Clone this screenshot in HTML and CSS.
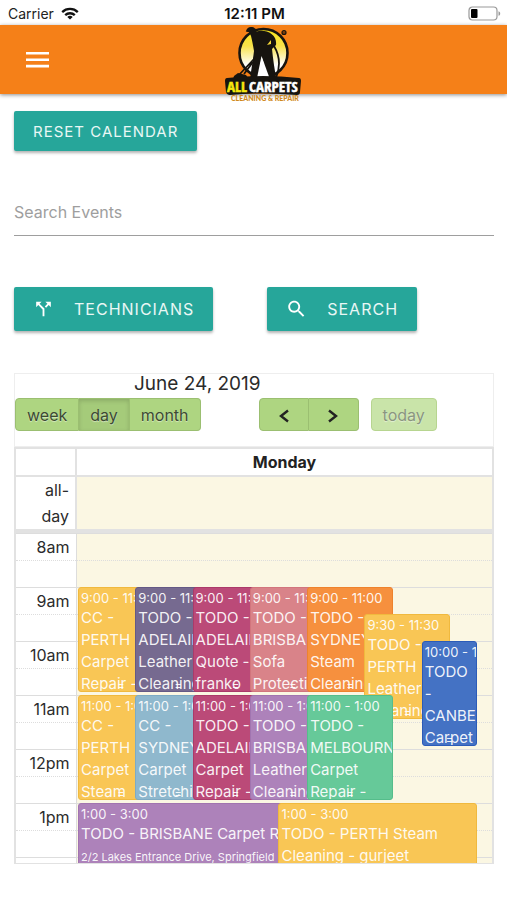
FILE: index.html
```html
<!DOCTYPE html>
<html lang="en">
<head>
    <meta charset="UTF-8">
    <meta name="viewport" content="width=device-width, initial-scale=1.0">
    <title>All Carpets Calendar</title>
    <link rel="stylesheet" href="styles.css">
</head>
<body>
    <div class="status-bar">
        <div class="carrier">
            <span>Carrier</span>
            <svg width="18" height="13" viewBox="0 0 18 13" fill="none" stroke="#111" stroke-width="2.3">
                <path d="M1.2 5.1a11.2 11.2 0 0 1 15.6 0"/>
                <path d="M4.2 8.2a6.9 6.9 0 0 1 9.6 0"/>
                <path d="M9 12.6L6.3 10a3.8 3.8 0 0 1 5.4 0z" fill="#111" stroke="none"/>
            </svg>
        </div>
        <span class="clock">12:11 PM</span>
        <svg class="battery" width="33" height="15" viewBox="0 0 33 15">
            <rect x="1" y="1" width="28" height="13" rx="3.5" fill="#fff" stroke="#999" stroke-width="1.2"/>
            <rect x="3" y="3" width="6.5" height="9" rx="1" fill="#000"/>
            <path d="M30.5 5.2v4.6c1.300-.4 1.700-1.300 1.700-2.300s-.4-1.900-1.700-2.300z" fill="#999"/>
        </svg>
    </div>

    <header class="navbar">
        <button class="menu-btn" aria-label="Menu">
            <svg width="23" height="16" viewBox="0 0 23 16" fill="#fff">
                <path d="M0 0h23v2.600H0zM0 6.400h23V9H0zM0 12.800h23v2.600H0z"/>
            </svg>
        </button>
        <a class="logo" href="#" aria-label="All Carpets">
            <svg width="78" height="78" viewBox="0 0 78 78">
                <defs>
                    <linearGradient id="sun" x1="0" y1="0" x2="0" y2="1">
                        <stop offset="0" stop-color="#f7e51b"/>
                        <stop offset=".35" stop-color="#f8e24a"/>
                        <stop offset=".75" stop-color="#fff"/>
                    </linearGradient>
                </defs>
                <circle cx="39.500" cy="27" r="24" fill="url(#sun)" stroke="#17140f" stroke-width="2.600"/>
                <path d="M22 5c1-3 3-4.500 6-4 3 .4 4.500 2.500 4.500 4.500 5-1.500 11-.5 15 2.500 4 3 5 7 4.500 11l-4 4c1 10 2.500 20 4.500 31H42c-.5-9-2-17-4-22-2 6-3 14-3 22h-9c1-10 3-20 4-29-1-6-2-11-3-15l-2-4c-2 0-4-.5-3-1z" fill="#17140f"/>
                <path d="M37.500 30l8 22H33z" fill="#fff"/>
                <path d="M47 14l-4 5 4-1z" fill="#f7d93a"/>
                <path d="M35 19L30 33 14 50M50 20c6 10 6 22 2 32M29 36l-9 12" fill="none" stroke="#17140f" stroke-width="1.800"/>
                <path d="M10 50l4-3 8 2 3 4H9z" fill="#17140f"/>
                <circle cx="60" cy="6.500" r="2" fill="#7d3c0a" stroke="#17140f" stroke-width="1.200"/>
                <path d="M3 52q36-4 72 0 2 0 2 3l-1 11q0 3-3 3-34-3-67 0-3 0-4-3L1 55q0-3 2-3z" fill="#17140f"/>
                <text x="3" y="66" class="logo-main"><tspan fill="#f6e70d" stroke="#f6e70d">ALL</tspan><tspan x="25" fill="#fff" stroke="#fff">CARPETS</tspan></text>
                <text x="7" y="75" class="logo-sub">CLEANING &amp; REPAIR</text>
            </svg>
        </a>
    </header>

    <main class="content">
        <button class="btn">RESET CALENDAR</button>

        <input class="search-input" type="search" placeholder="Search Events" aria-label="Search Events">

        <div class="actions">
            <button class="btn btn-icon">
                <svg width="24" height="24" viewBox="0 0 24 24" fill="#fff">
                    <path d="M14 4l2.290 2.290-2.880 2.880 1.420 1.420 2.880-2.880L20 10V4zM10 4H4v6l2.290-2.290 4.710 4.700V20h2v-8.410l-5.290-5.300z"/>
                </svg>
                TECHNICIANS
            </button>
            <button class="btn btn-icon">
                <svg width="24" height="24" viewBox="0 0 24 24" fill="#fff">
                    <path d="M15.500 14h-.79l-.28-.27C15.410 12.590 16 11.110 16 9.500 16 5.910 13.090 3 9.500 3S3 5.910 3 9.500 5.910 16 9.500 16c1.610 0 3.090-.59 4.230-1.570l.27.28v.79l5 4.990L20.490 19l-4.990-5zm-6 0C7.010 14 5 11.990 5 9.500S7.010 5 9.500 5 14 7.010 14 9.500 11.990 14 9.500 14z"/>
                </svg>
                SEARCH
            </button>
        </div>

        <section class="calendar">
            <div class="toolbar">
                <h2>June 24, 2019</h2>
                <div class="toolbar-row">
                    <div class="button-group views">
                        <button>week</button>
                        <button class="active">day</button>
                        <button>month</button>
                    </div>
                    <div class="button-group arrows">
                        <button aria-label="Previous">
                            <svg width="10" height="14" viewBox="0 0 10 14"><path d="M9 1.500L2 7l7 5.500"/></svg>
                        </button>
                        <button aria-label="Next">
                            <svg width="10" height="14" viewBox="0 0 10 14"><path d="M1 1.500L8 7l-7 5.500"/></svg>
                        </button>
                    </div>
                    <button class="today" disabled>today</button>
                </div>
            </div>

            <table class="day-head">
                <thead>
                    <tr><th class="axis"></th><th>Monday</th></tr>
                </thead>
                <tbody>
                    <tr class="all-day"><td class="axis">all-day</td><td class="today-cell"></td></tr>
                </tbody>
            </table>

            <div class="time-grid">
                <table class="slots">
                    <tbody>
                        <tr><td class="axis">8am</td><td></td></tr>
                        <tr class="minor"><td class="axis"></td><td></td></tr>
                        <tr><td class="axis">9am</td><td></td></tr>
                        <tr class="minor"><td class="axis"></td><td></td></tr>
                        <tr><td class="axis">10am</td><td></td></tr>
                        <tr class="minor"><td class="axis"></td><td></td></tr>
                        <tr><td class="axis">11am</td><td></td></tr>
                        <tr class="minor"><td class="axis"></td><td></td></tr>
                        <tr><td class="axis">12pm</td><td></td></tr>
                        <tr class="minor"><td class="axis"></td><td></td></tr>
                        <tr><td class="axis">1pm</td><td></td></tr>
                        <tr class="minor"><td class="axis"></td><td></td></tr>
                        <tr><td class="axis"></td><td></td></tr>
                    </tbody>
                </table>

                <!-- one grid row per half hour, 14 columns for the overlaps -->
                <div class="events">
                    <div class="event yellow at-9 col-1"><time>9:00 - 11:00</time><p>CC -<br>PERTH Carpet Repair -</p></div>
                    <div class="event slate at-9 col-3"><time>9:00 - 11:00</time><p>TODO - ADELAIDE Leather Cleaning</p></div>
                    <div class="event magenta at-9 col-5"><time>9:00 - 11:00</time><p>TODO - ADELAIDE Quote - franko</p></div>
                    <div class="event rose at-9 col-7"><time>9:00 - 11:00</time><p>TODO - BRISBANE Sofa Protection</p></div>
                    <div class="event orange at-9 col-9"><time>9:00 - 11:00</time><p>TODO - SYDNEY Steam Cleaning</p></div>
                    <div class="event yellow at-930 col-11"><time>9:30 - 11:30</time><p>TODO - PERTH Leather Cleaning</p></div>
                    <div class="event blue at-10 col-13"><time>10:00 - 12:00</time><p>TODO - CANBERRA Carpet</p></div>
                    <div class="event yellow at-11 col-1"><time>11:00 - 1:00</time><p>CC -<br>PERTH Carpet Steam</p></div>
                    <div class="event sky at-11 col-3"><time>11:00 - 1:00</time><p>CC -<br>SYDNEY Carpet Stretching</p></div>
                    <div class="event magenta at-11 col-5"><time>11:00 - 1:00</time><p>TODO - ADELAIDE Carpet Repair -</p></div>
                    <div class="event purple at-11 col-7"><time>11:00 - 1:00</time><p>TODO - BRISBANE Leather Cleaning</p></div>
                    <div class="event green at-11 col-9"><time>11:00 - 1:00</time><p>TODO - MELBOURNE Carpet Repair -</p></div>
                    <div class="event purple at-1 wide-left"><time>1:00 - 3:00</time><p>TODO - BRISBANE Carpet Repair</p><small>2/2 Lakes Entrance Drive, Springfield</small></div>
                    <div class="event yellow at-1 wide-right"><time>1:00 - 3:00</time><p>TODO - PERTH Steam Cleaning - gurjeet</p></div>
                </div>
            </div>
        </section>
    </main>
</body>
</html>
```
FILE: styles.css
```css
* {
    box-sizing: border-box;
}
body {
    font-family: Inter, 'Liberation Sans', sans-serif;
    font-size: 16px;
    margin: 0;
    background: #fff;
    color: #2b2b2b;
}
button {
    font-family: inherit;
    cursor: pointer;
}
.status-bar {
    display: grid;
    grid-template-columns: 1fr auto 1fr;
    align-items: center;
    height: 25px;
    padding: 2px 6px 0 8px;
    font-size: 14px;
    color: #222;
}
.carrier {
    display: flex;
    align-items: center;
    gap: 7px;
}
.clock {
    font-size: 15px;
    font-weight: 600;
    color: #111;
}
.battery {
    justify-self: end;
}
.navbar {
    position: relative;
    display: flex;
    align-items: center;
    height: 69px;
    padding: 0 26px;
    background: #f58018;
    box-shadow: 0 1px 4px rgba(0,0,0,0.45);
}
.menu-btn {
    padding: 0;
    border: none;
    background: none;
    line-height: 0;
}
/* logo hangs over the bottom edge of the bar */
.logo {
    position: absolute;
    top: 1px;
    left: 50%;
    margin-left: -30px;
    line-height: 0;
}
.logo-main {
    font-family: 'Liberation Sans Narrow', 'Open Sans Condensed', 'Liberation Sans', sans-serif;
    font-size: 15px;
    font-weight: 700;
    stroke-width: 0.5;
}
.logo-sub {
    font-family: Lato, sans-serif;
    font-size: 7px;
    font-weight: 900;
    fill: #d08a1c;
}
.content {
    padding: 17px 13px 36px 14px;
}
.btn {
    height: 40px;
    padding: 0 19px;
    border: none;
    border-radius: 2px;
    background: #26a69a;
    color: #e9f7f5;
    font-size: 15px;
    letter-spacing: 1px;
    box-shadow: 0 2px 3px rgba(0,0,0,0.3);
}
.search-input {
    display: block;
    width: 100%;
    height: 48px;
    margin: 37px 0 51px;
    padding: 0;
    border: none;
    border-bottom: 1px solid #9e9e9e;
    background: none;
    font-family: inherit;
    font-size: 16px;
    outline: none;
}
.search-input::placeholder {
    color: #9e9e9e;
}
.actions {
    display: flex;
    gap: 54px;
}
.btn-icon {
    display: flex;
    align-items: center;
    gap: 19px;
    height: 44px;
    padding: 0 19px 0 18px;
    font-size: 16px;
}
.btn-icon svg {
    width: 23px;
    height: 22px;
}
.calendar {
    margin-top: 42px;
}
.toolbar {
    height: 74px;
    border: 1px solid #eee;
}
.toolbar h2 {
    margin: 0 0 0 119px;
    font-size: 19px;
    font-weight: 400;
    line-height: 20px;
}
.toolbar-row {
    display: flex;
    margin-top: 4px;
}
.button-group {
    display: flex;
}
.toolbar button {
    height: 33px;
    padding: 0 11px;
    border: 1px solid #9bbf71;
    background: #aed581;
    color: #3c4a34;
    font-size: 16px;
    text-shadow: 0 1px 1px rgba(255,255,255,0.5);
}
.button-group button + button {
    border-left: none;
}
.button-group button:first-child {
    border-radius: 4px 0 0 4px;
}
.button-group button:last-child {
    border-radius: 0 4px 4px 0;
}
.toolbar .active {
    background: #a5cb7a;
    box-shadow: inset 0 2px 4px rgba(0,0,0,0.15);
}
.views {
    margin-right: 58px;
}
.arrows {
    margin-right: 12px;
}
.arrows button {
    width: 50px;
}
.arrows svg {
    display: block;
    margin: 2px auto 0;
    fill: none;
    stroke: #222;
    stroke-width: 2.4;
}
.toolbar .today {
    border-radius: 4px;
    border-color: #b7d590;
    background: #c9e4a9;
    color: #8a9680;
}
table {
    width: 100%;
    border-collapse: collapse;
    table-layout: fixed;
}
td,
th {
    padding: 0;
    border: 1px solid #ddd;
}
.axis {
    width: 61px;
    padding-right: 6px;
    background: #fff;
    text-align: right;
    font-weight: 400;
}
.day-head {
    border: 2px solid #e2e2e2;
}
.day-head th {
    height: 28px;
    border: 2px solid #e2e2e2;
    font-size: 16px;
    color: #222;
}
.all-day td {
    height: 54px;
    line-height: 26px;
    border: 2px solid #e2e2e2;
}
.all-day .axis {
    padding-left: 20px;
}
.today-cell {
    background: #fbf7e3;
}
.time-grid {
    position: relative;
    height: 333px;
    overflow: hidden;
    border: 2px solid #e2e2e2;
    border-width: 2px 2px 1px 2px;
}
.slots {
    background: #fbf7e3;
}
.slots tr {
    height: 27px;
}
.slots td {
    height: 27px;
    border-width: 1px 0 0 0;
    line-height: 26px;
}
.slots .axis {
    width: 60px;
    border-right: 1px solid #ddd;
}
.slots .minor td {
    border-top-style: dotted;
}
/* lies over the slot lines */
.events {
    position: absolute;
    top: 0;
    left: 62px;
    right: 13px;
    display: grid;
    grid-template-columns: repeat(14, 1fr);
    grid-template-rows: repeat(14, 27px);
}
.event {
    position: relative;
    min-width: 0;
    margin-bottom: 3px;
    padding: 1px 0 0 2px;
    overflow: hidden;
    border: 1px solid;
    border-radius: 3px;
    color: rgba(255,255,255,0.93);
}
.event time {
    display: block;
    height: 18px;
    font-size: 13px;
    line-height: 18px;
    white-space: nowrap;
}
.event p {
    margin: 0;
    font-size: 15px;
    line-height: 22px;
}
.event small {
    display: block;
    font-size: 11px;
    line-height: 24px;
    white-space: nowrap;
}
/* resize handle */
.event::after {
    content: '=';
    position: absolute;
    left: 0;
    right: 0;
    bottom: 0;
    font-size: 11px;
    line-height: 11px;
    text-align: center;
}
.at-9 { grid-row: 3 / span 4; }
.at-930 { grid-row: 4 / span 4; }
.at-10 { grid-row: 5 / span 4; }
.at-11 { grid-row: 7 / span 4; }
.at-1 { grid-row: 11 / span 4; }
.col-1 { grid-column: 1 / span 3; }
.col-3 { grid-column: 3 / span 3; }
.col-5 { grid-column: 5 / span 3; }
.col-7 { grid-column: 7 / span 3; }
.col-9 { grid-column: 9 / span 3; }
.col-11 { grid-column: 11 / span 3; }
.col-13 { grid-column: 13 / span 2; margin-right: 2px; }
.wide-left { grid-column: 1 / span 11; }
.wide-right { grid-column: 8 / span 7; margin-right: 2px; }
.yellow { background: #f9c655; border-color: #f0b93e; }
.slate { background: #766a90; border-color: #645985; }
.magenta { background: #bb4a78; border-color: #ab3a6a; }
.rose { background: #d98389; border-color: #d2757d; }
.orange { background: #f6903e; border-color: #ee832d; }
.blue { background: #4472c4; border-color: #2b5bb8; }
.sky { background: #8fb8cd; border-color: #7dabc4; }
.purple { background: #ad82ba; border-color: #a174b0; }
.green { background: #66c999; border-color: #55bd8b; }
```
